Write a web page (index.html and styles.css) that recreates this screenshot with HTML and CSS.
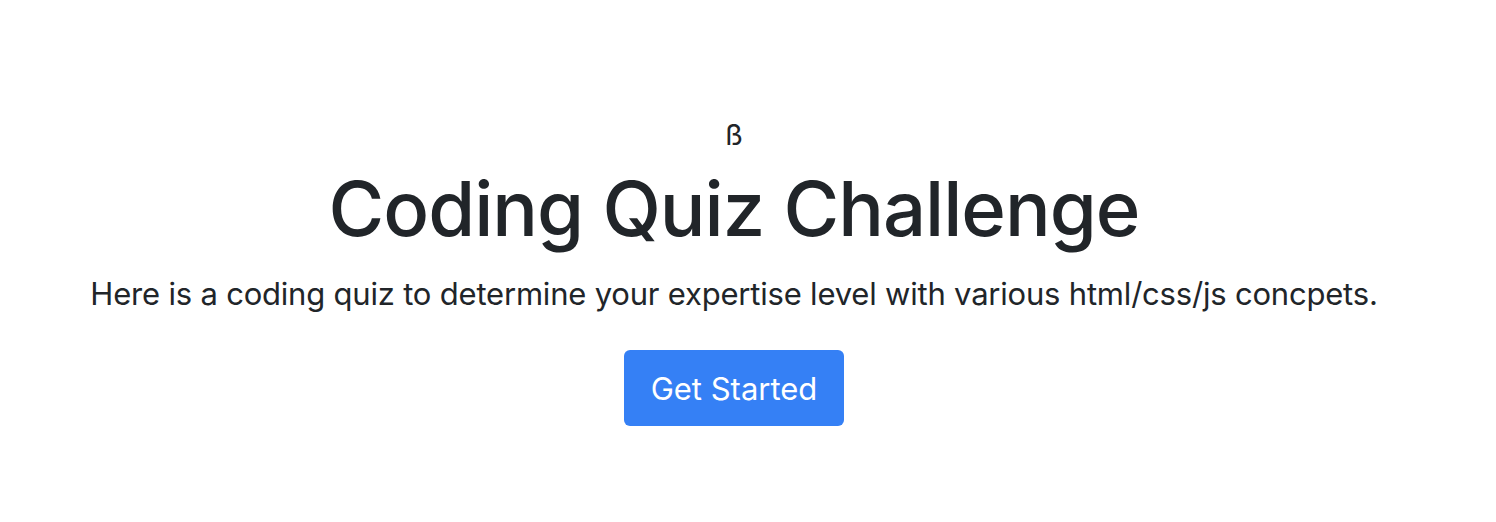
FILE: index.html
```html
<!DOCTYPE html>
<html lang="en">
<head>
<meta charset="utf-8">
<title>Coding Quiz Challenge</title>
<link rel="stylesheet" href="styles.css">
</head>
<body>
<main class="hero">
  <div class="beta">ß</div>
  <h1 class="title">Coding Quiz Challenge</h1>
  <p class="lead">Here is a coding quiz to determine your expertise level with various html/css/js concpets.</p>
  <button class="btn-start" type="button">Get Started</button>
</main>
</body>
</html>
```
FILE: styles.css
```css
html, body {
  margin: 0;
  padding: 0;
  background: #ffffff;
}
body {
  font-family: Inter, "Noto Sans", "Liberation Sans", sans-serif;
  color: #212529;
}
.hero {
  display: flex;
  flex-direction: column;
  align-items: center;
  padding-top: 117px;
  padding-right: 28px;
}
.beta {
  font-size: 29px;
  line-height: 36px;
  font-weight: 400;
}
.title {
  margin: 5px 0 0;
  font-size: 76px;
  font-weight: 500;
  line-height: 100px;
  letter-spacing: -1px;
}
.lead {
  margin: 15px 0 0;
  font-size: 31px;
  line-height: 42px;
  font-weight: 400;
  letter-spacing: -0.2px;
}
.btn-start {
  margin-top: 35px;
  width: 220px;
  height: 76px;
  border: none;
  border-radius: 6px;
  background: #3580f5;
  color: #ffffff;
  font-family: inherit;
  font-size: 31px;
}
```
